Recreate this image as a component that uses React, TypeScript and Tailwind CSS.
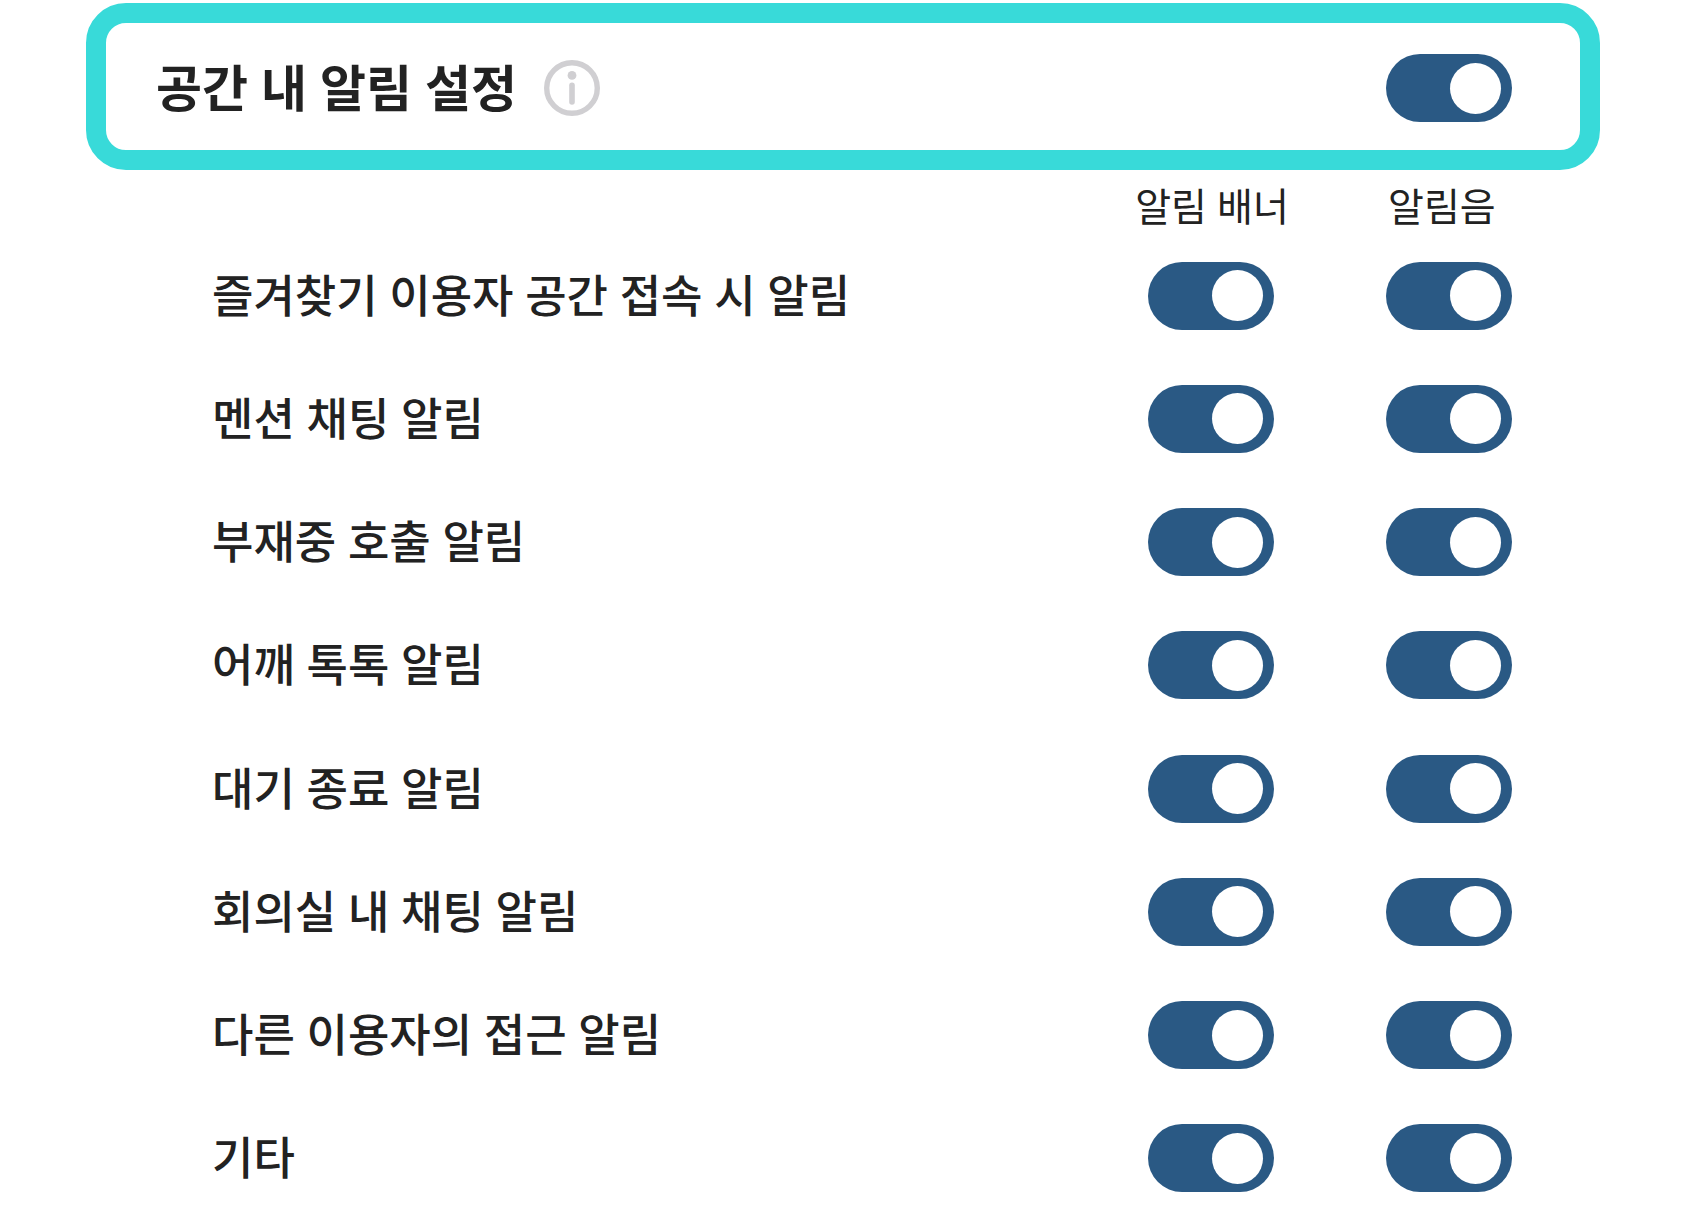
import React from "react";

const channels = [
  { key: "banner", label: "알림 배너" },
  { key: "sound", label: "알림음" },
];

const alarms = [
  "즐겨찾기 이용자 공간 접속 시 알림",
  "멘션 채팅 알림",
  "부재중 호출 알림",
  "어깨 톡톡 알림",
  "대기 종료 알림",
  "회의실 내 채팅 알림",
  "다른 이용자의 접근 알림",
  "기타",
];

function Toggle({ label }: { label: string }) {
  return (
    <input
      type="checkbox"
      role="switch"
      aria-label={label}
      defaultChecked
      className="flex h-[68px] w-[126px] shrink-0 cursor-pointer appearance-none items-center rounded-full bg-gray-300 px-[11px] before:size-[51px] before:rounded-full before:bg-white checked:justify-end checked:bg-[#2a5984]"
    />
  );
}

function InfoIcon() {
  return (
    <svg viewBox="0 0 56 56" fill="none" className="size-14">
      <circle cx="28" cy="28" r="25.3" stroke="#d0cfd2" strokeWidth="5.4" />
      <circle cx="28" cy="15.4" r="4.4" fill="#d0cfd2" />
      <path
        d="M28 25.2V42"
        stroke="#d0cfd2"
        strokeWidth="5.6"
        strokeLinecap="round"
      />
    </svg>
  );
}

export default function App() {
  return (
    <main className="flex min-h-screen flex-col bg-white px-[86px] pt-[3px] font-['Noto_Sans','Noto_Sans_CJK_KR',sans-serif] text-[#222]">
      <header className="flex items-center justify-between rounded-[40px] border-[20px] border-[#38dad9] pt-[31px] pr-[68px] pb-7 pl-[50px]">
        <div className="flex items-center gap-[27px]">
          <h1 className="text-[50px] leading-[60px] font-bold">
            공간 내 알림 설정
          </h1>
          <button type="button" aria-label="알림 설정 안내">
            <InfoIcon />
          </button>
        </div>
        <Toggle label="공간 내 알림 설정" />
      </header>

      <table className="flex flex-1 flex-col pr-[88px] pl-[126px]">
        <thead>
          <tr className="flex h-16 items-center pt-2 text-[39px] leading-[56px] whitespace-nowrap">
            <td className="flex-1" />
            <th scope="col" className="w-[156px] font-normal">
              {channels[0].label}
            </th>
            <th scope="col" className="ml-24 w-[126px] pl-0.5 text-left font-normal">
              {channels[1].label}
            </th>
          </tr>
        </thead>
        <tbody className="grid flex-1 auto-rows-fr">
          {alarms.map((alarm) => (
            <tr key={alarm} className="flex items-center gap-28">
              <th scope="row" className="flex-1 text-left text-[45px] leading-[60px] font-medium">
                {alarm}
              </th>
              {channels.map((channel) => (
                <td key={channel.key}>
                  <Toggle label={`${alarm} ${channel.label}`} />
                </td>
              ))}
            </tr>
          ))}
        </tbody>
      </table>
    </main>
  );
}
